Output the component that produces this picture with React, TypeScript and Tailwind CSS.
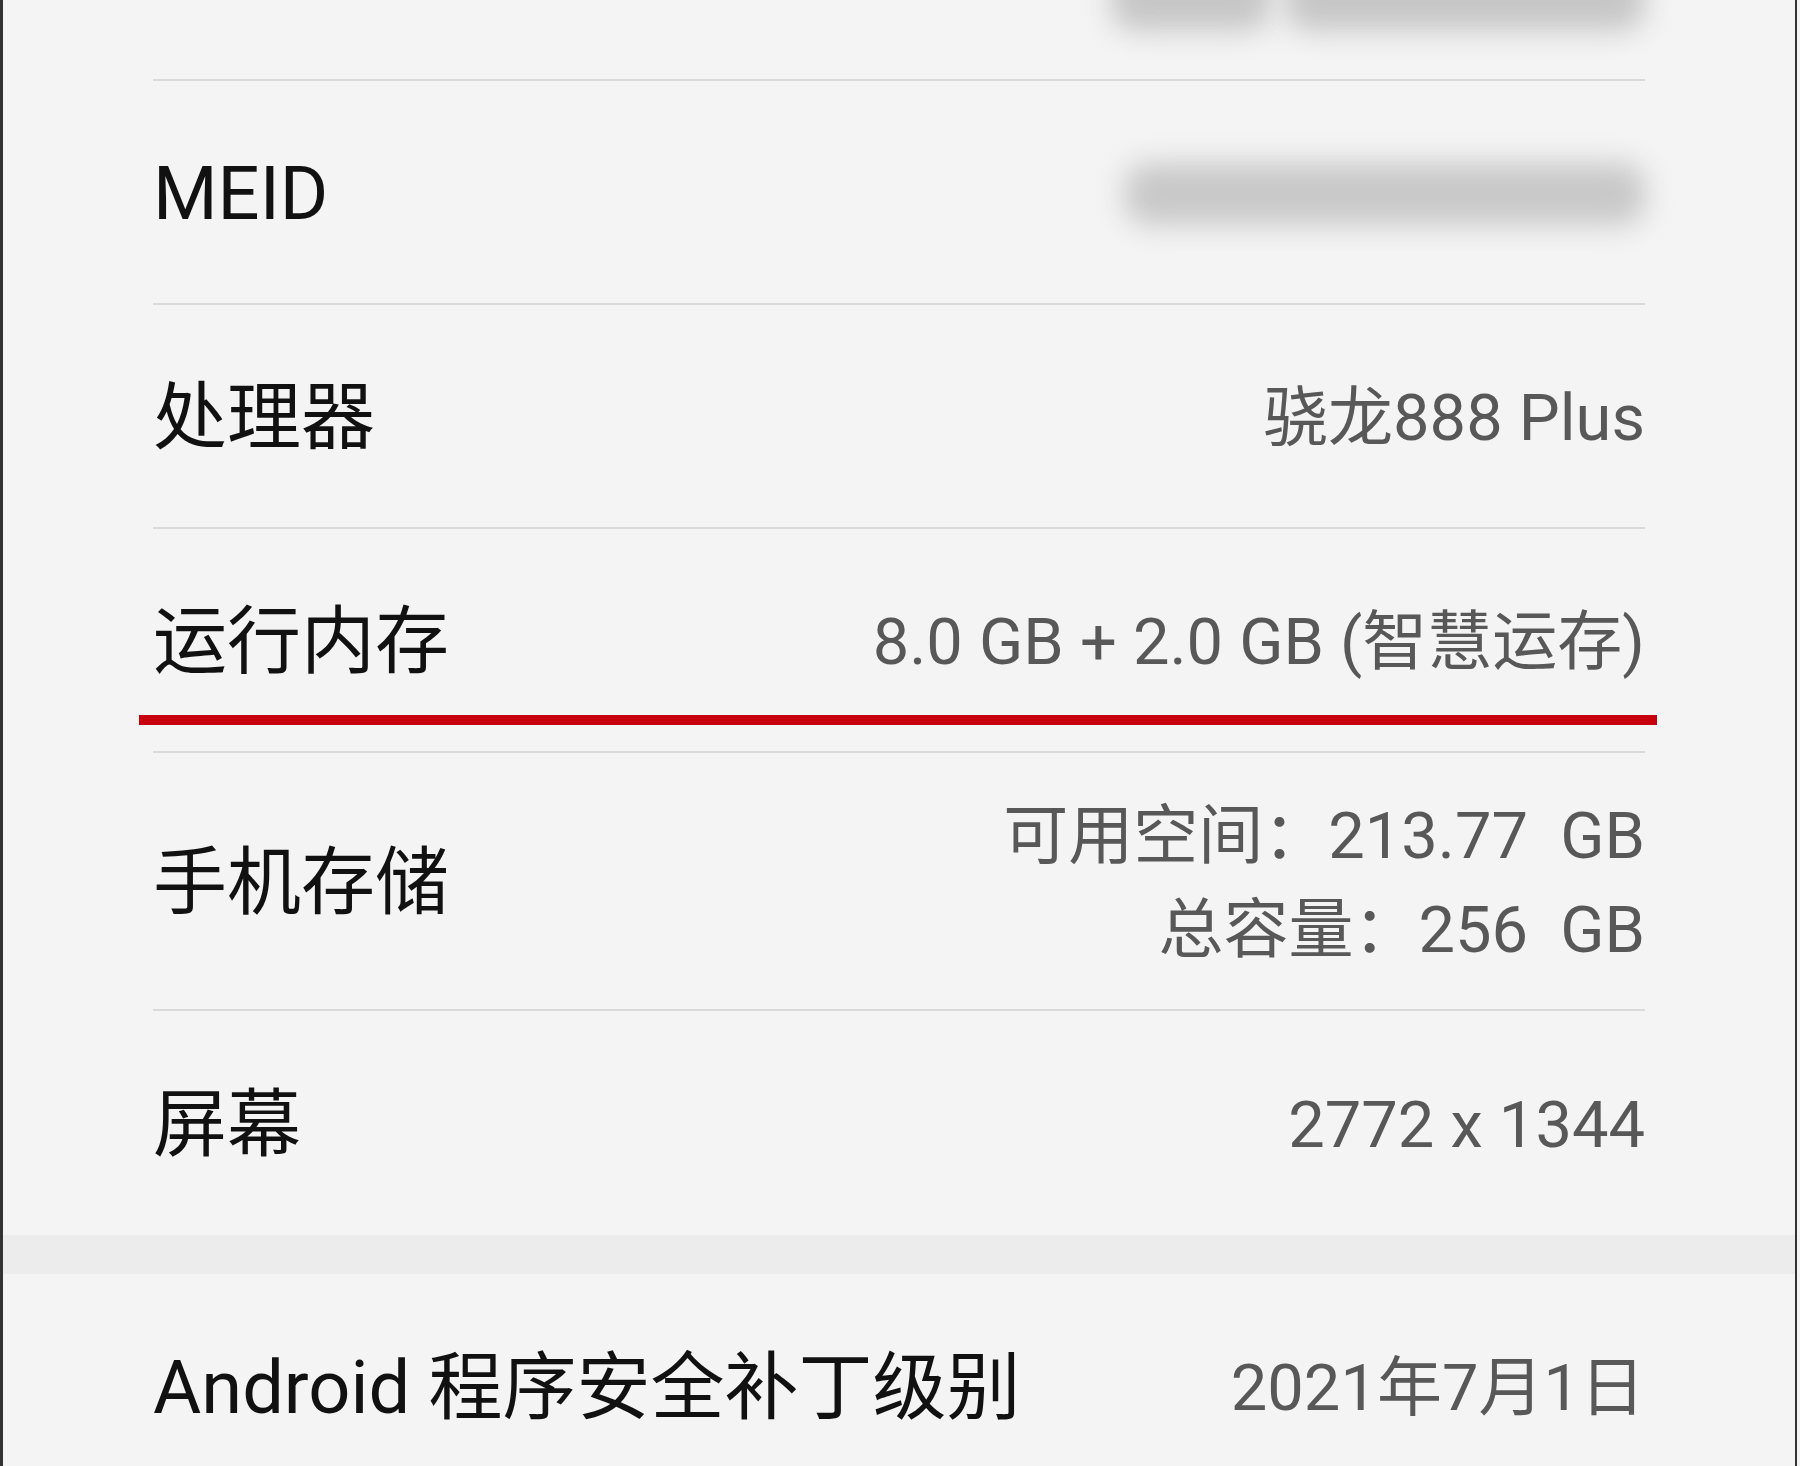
import type { ReactNode } from 'react';

/** 一行设备信息 */
function InfoRow({
  label,
  children,
  height = 'h-[224px]',
  divider = true,
  overlay,
}: {
  label: ReactNode;
  children: ReactNode;
  height?: string;
  divider?: boolean;
  overlay?: ReactNode;
}) {
  return (
    <div
      className={`relative mx-[150px] ${height} flex items-center justify-between pt-[4px] ${
        divider ? 'border-b-2 border-[#dadada]' : ''
      }`}
    >
      <div className="text-[74px] leading-none text-[#111111]">{label}</div>
      <div className="text-right text-[65px] leading-none text-[#585858]">{children}</div>
      {overlay}
    </div>
  );
}

export default function App() {
  return (
    <div
      className="w-[1800px] h-[1466px] overflow-hidden bg-[#f4f4f4]"
      style={{ fontFamily: 'Roboto, "Noto Sans CJK SC", sans-serif' }}
    >
      <div className="w-[1797px] h-full overflow-hidden border-l-[3px] border-r-[2px] border-[#333333] bg-[#f4f4f4]">
        <div className="-mt-[143px]">
          {/* 上一行（只露出一半） */}
          <InfoRow label="">
            <div className="flex items-center gap-[14px] pt-[56px]">
              <div className="h-[66px] w-[160px] rounded-[24px] bg-[#c6c6c6] blur-[14px]" />
              <div className="h-[66px] w-[360px] rounded-[24px] bg-[#c6c6c6] blur-[14px]" />
            </div>
          </InfoRow>

          <InfoRow label="MEID">
            <div className="h-[62px] w-[520px] rounded-[22px] bg-[#c8c8c8] blur-[14px]" />
          </InfoRow>

          <InfoRow label="处理器">骁龙888 Plus</InfoRow>

          <InfoRow
            label="运行内存"
            overlay={
              <div className="absolute left-[-14px] top-[186px] h-[10px] w-[1518px] bg-[#c6000c]" />
            }
          >
            8.0 GB + 2.0 GB (智慧运存)
          </InfoRow>

          <InfoRow label="手机存储" height="h-[258px]">
            <div className="flex flex-col items-end gap-[29px] whitespace-pre">
              <div>可用空间：213.77  GB</div>
              <div>总容量：256  GB</div>
            </div>
          </InfoRow>

          <InfoRow label="屏幕" divider={false}>
            2772 x 1344
          </InfoRow>

          {/* 分组间隔 */}
          <div className="h-[39px] bg-[#ececec]" />

          <InfoRow label="Android 程序安全补丁级别" divider={false}>
            2021年7月1日
          </InfoRow>
        </div>
      </div>
    </div>
  );
}
